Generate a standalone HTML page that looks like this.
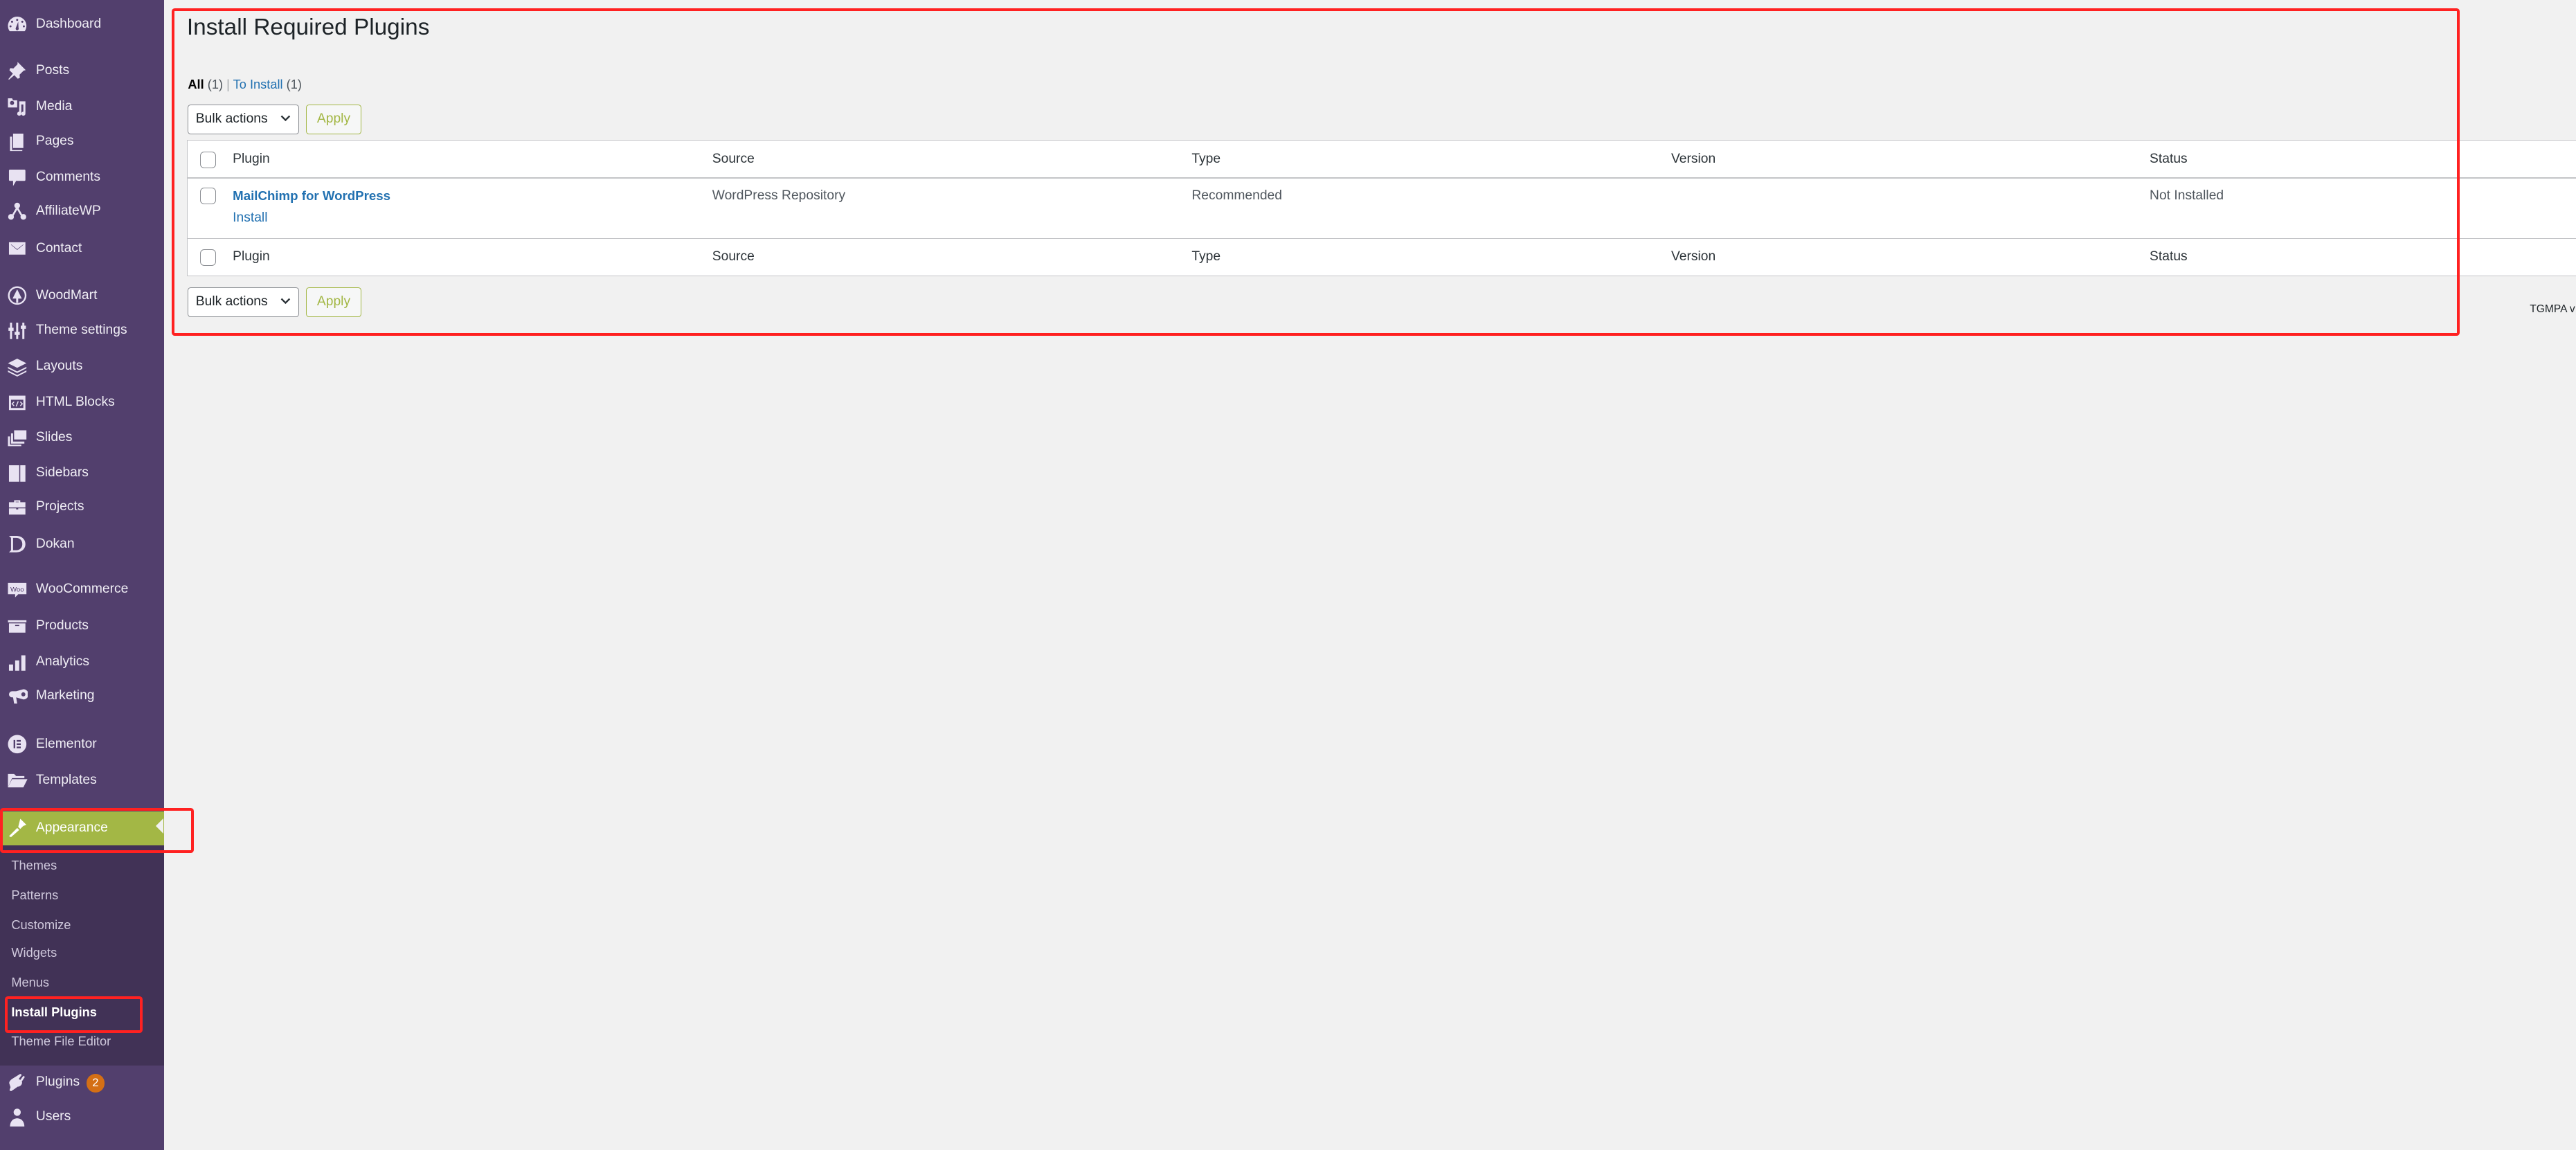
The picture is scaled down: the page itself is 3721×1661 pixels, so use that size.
<!DOCTYPE html>
<html><head><meta charset="utf-8"><style>
html,body{margin:0;padding:0}
body{width:2509px;height:1096px;zoom:1.48307;background:#f1f1f1;font-family:"Liberation Sans",sans-serif;position:relative;overflow:hidden;color:#1d2327}
#side{position:absolute;left:0;top:0;width:160px;height:1120px;background:#523f6d}
.it{position:absolute;left:0;width:160px;height:30px;line-height:30px;color:#f0eef5;font-size:13px}
.it span{position:absolute;left:35px;top:0}
.it svg{position:absolute;left:7px;top:5px;width:20px;height:20px;fill:#e8e2f2}
#sub{position:absolute;left:0;top:823px;width:160px;height:215px;background:#413256}
.si{position:absolute;left:11px;font-size:12.3px;color:#cfc8dc;height:20px;line-height:20px}
#green{position:absolute;left:0;top:790px;width:160px;height:33px;background:#a3b745}
.red{position:absolute;border:3px solid #ff2121;border-radius:3px;box-sizing:border-box}
h1{position:absolute;left:182px;top:14px;margin:0;font-weight:400;font-size:22.5px;color:#1d2327}
.subsub{position:absolute;left:183px;top:75px;font-size:12.3px;color:#50575e}
.subsub b{color:#000;font-weight:600}
.subsub a{color:#2271b1}
.sel{position:absolute;width:108px;height:29px;border:1px solid #8c8f94;border-radius:3px;background:#fff;box-sizing:border-box;font-size:13px;line-height:27px;padding-left:7px}
.sel svg{position:absolute;right:7px;top:9px}
.app{position:absolute;width:54px;height:29px;border:1px solid #a3b745;border-radius:3px;background:#f6f7f7;box-sizing:border-box;color:#a3b745;font-size:13px;line-height:27px;text-align:center}
#tbl{position:absolute;left:182px;top:136px;width:2340px;height:133px;background:#fff;border:1px solid #c3c4c7;box-sizing:border-box}
.hl{position:absolute;left:0;right:0;height:1px;background:#c3c4c7}
.t{position:absolute;font-size:13px;color:#2c3338;white-space:nowrap}
.cb{position:absolute;left:12px;width:16px;height:16px;border:1px solid #8c8f94;border-radius:4px;box-sizing:border-box;background:#fff}
</style></head><body>
<div id="side">
<div class="it" style="top:9px"><svg viewBox="0 0 20 20"><path d="M10 2a9 9 0 0 0-9 9c0 2 .6 3.8 1.7 5.3h14.6A9 9 0 0 0 19 11a9 9 0 0 0-9-9zm0 2.2a1 1 0 1 1 0 2 1 1 0 0 1 0-2zM5 6a1 1 0 1 1 0 2 1 1 0 0 1 0-2zm10 0a1 1 0 1 1 0 2 1 1 0 0 1 0-2zM3.5 10.5a1 1 0 1 1 0 2 1 1 0 0 1 0-2zm13 0a1 1 0 1 1 0 2 1 1 0 0 1 0-2zM11 7l.3 6a1.5 1.5 0 1 1-2.6 0z"/></svg><span>Dashboard</span></div>
<div class="it" style="top:54px"><svg viewBox="0 0 20 20"><path d="M10.4 1.7l7.9 7.9-2 .5-4 4 .3 3-2 .9-3.4-3.4L2 19l-.6-.6 4.4-5.3-3.4-3.4.9-2 3 .3 4-4z"/></svg><span>Posts</span></div>
<div class="it" style="top:89px"><svg viewBox="0 0 20 20"><path d="M1 2h4l1 2h4v7H1zm4 2.5a2 2 0 1 0 0 4 2 2 0 0 0 0-4zM12 5h6v12a2 2 0 1 1-2-2V8h-2v9a2 2 0 1 1-2-2z"/></svg><span>Media</span></div>
<div class="it" style="top:123px"><svg viewBox="0 0 20 20"><path d="M6 2h10v14H6zM3 5h2v13h10v1H3z"/></svg><span>Pages</span></div>
<div class="it" style="top:158px"><svg viewBox="0 0 20 20"><path d="M3 2h14a1 1 0 0 1 1 1v9a1 1 0 0 1-1 1H9l-3 5v-5H3a1 1 0 0 1-1-1V3a1 1 0 0 1 1-1z"/></svg><span>Comments</span></div>
<div class="it" style="top:191px"><svg viewBox="0 0 20 20"><circle cx="10" cy="4" r="2.8"/><circle cx="4" cy="15" r="2.8"/><circle cx="16" cy="15" r="2.8"/><path d="M9 6l-4 7 1.5.8L10 8l3.5 5.8L15 13l-4-7z"/></svg><span>AffiliateWP</span></div>
<div class="it" style="top:227px"><svg viewBox="0 0 20 20"><path d="M2 4h16v12H2zm2 2v.5l6 5 6-5V6l-6 4.8z"/></svg><span>Contact</span></div>
<div class="it" style="top:273px"><svg viewBox="0 0 20 20"><path d="M10 1a9 9 0 1 0 0 18 9 9 0 0 0 0-18zm0 1.6a7.4 7.4 0 1 1 0 14.8 7.4 7.4 0 0 1 0-14.8zM10 4l-4.5 9h3.5v4h2v-4h3.5z"/></svg><span>WoodMart</span></div>
<div class="it" style="top:307px"><svg viewBox="0 0 20 20"><path d="M3 2h2v16H3zm6 0h2v16H9zm6 0h2v16h-2zM1.5 7h5v3h-5zm6 4h5v3h-5zm6-6h5v3h-5z"/></svg><span>Theme settings</span></div>
<div class="it" style="top:342px"><svg viewBox="0 0 20 20"><path d="M10 2l9 4.5-9 4.5-9-4.5zM1 10l9 4.5 9-4.5v1.5l-9 4.5-9-4.5zm0 3.5l9 4.5 9-4.5V15l-9 4.5L1 15z"/></svg><span>Layouts</span></div>
<div class="it" style="top:377px"><svg viewBox="0 0 20 20"><path d="M2 3h16v14H2zm2 4v8h12V7z"/><path d="M7 9l-2 2 2 2M13 9l2 2-2 2M11 8.5l-2 5" stroke="#e8e2f2" fill="none"/></svg><span>HTML Blocks</span></div>
<div class="it" style="top:411px"><svg viewBox="0 0 20 20"><path d="M7 3h12v9H7zM4 6h2v8h11v2H4zM1 9h2v8h11v1.5H1z"/></svg><span>Slides</span></div>
<div class="it" style="top:446px"><svg viewBox="0 0 20 20"><path d="M2 2h10v16H2zm11 0h5v16h-5z"/></svg><span>Sidebars</span></div>
<div class="it" style="top:479px"><svg viewBox="0 0 20 20"><path d="M7 3h6v2h5v5H2V5h5zm1.5 1.5V5h3v-.5zM2 11h7v1h2v-1h7v6H2z"/></svg><span>Projects</span></div>
<div class="it" style="top:515px"><svg viewBox="0 0 20 20"><path d="M2 2h7c5 0 9 3 9 8s-4 8-9 8H2l2-2V4zm4 2v12h3c3 0 6-2 6-6s-3-6-6-6z"/></svg><span>Dokan</span></div>
<div class="it" style="top:559px"><svg viewBox="0 0 20 20"><path d="M1 4h18v11h-8l-3 3v-3H1z"/><text x="10" y="12.5" font-size="6.5" text-anchor="middle" fill="#523f6d" font-family="Liberation Sans">Woo</text></svg><span>WooCommerce</span></div>
<div class="it" style="top:595px"><svg viewBox="0 0 20 20"><path d="M1 4h18v2H1zm1 3h16v9H2zm6 1.5v1h4v-1z"/></svg><span>Products</span></div>
<div class="it" style="top:630px"><svg viewBox="0 0 20 20"><path d="M2 12h4v6H2zm6-4h4v10H8zm6-5h4v15h-4z"/></svg><span>Analytics</span></div>
<div class="it" style="top:663px"><svg viewBox="0 0 20 20"><path d="M16 3a3 3 0 0 1 0 10l-7-2H5a3 3 0 0 1 0-6h4zm0 3a2 2 0 1 0 0 4 2 2 0 0 0 0-4zM6 11h3l1 6H7z"/></svg><span>Marketing</span></div>
<div class="it" style="top:710px"><svg viewBox="0 0 20 20"><path d="M10 1a9 9 0 1 0 0 18 9 9 0 0 0 0-18zM6.5 6h1.6v8H6.5zm3 0h4v1.6h-4zm0 3.2h4v1.6h-4zm0 3.2h4V14h-4z"/></svg><span>Elementor</span></div>
<div class="it" style="top:745px"><svg viewBox="0 0 20 20"><path d="M1 4h6l2 2h8v2H5l-4 9zm4 5h15l-4 8H1z"/></svg><span>Templates</span></div>
</div>
<div id="green"></div>
<div class="it" style="top:790px;height:33px;line-height:33px;color:#fff"><svg viewBox="0 0 20 20" style="top:6px;fill:#fff"><path d="M13 1l6 6-3 1-3 3-2-2zM10 10l-8 8 2 1 8-7z"/></svg><span>Appearance</span></div>
<div style="position:absolute;left:152px;top:797px;width:0;height:0;border-top:8px solid transparent;border-bottom:8px solid transparent;border-right:8px solid #f1f1f1"></div>
<div id="sub"></div>
<div class="si" style="top:833px">Themes</div>
<div class="si" style="top:862px">Patterns</div>
<div class="si" style="top:891px">Customize</div>
<div class="si" style="top:918px">Widgets</div>
<div class="si" style="top:947px">Menus</div>
<div class="si" style="top:976px;color:#fff;font-weight:bold">Install Plugins</div>
<div class="si" style="top:1004px">Theme File Editor</div>
<div class="it" style="top:1039px"><svg viewBox="0 0 20 20"><path d="M13 2l1.5 1-3 4 1.5 1 3-4 1.5 1-3 4.5c1 2-1 5-4 5L7 17l-3 2-1.5-1 1-3-1-3c-1-2 1-4 2.5-5z"/></svg><span>Plugins</span><div style="position:absolute;left:84px;top:7px;width:18px;height:18px;border-radius:9px;background:#d46f15;color:#fff;font-size:11px;line-height:18px;text-align:center">2</div></div>
<div class="it" style="top:1073px"><svg viewBox="0 0 20 20"><circle cx="10" cy="5" r="3.5"/><path d="M3 19c0-5 3-8 7-8s7 3 7 8z"/></svg><span>Users</span></div>

<h1>Install Required Plugins</h1>
<div class="subsub"><b>All</b> (1) <span style="color:#a7aaad">|</span> <a>To Install</a> (1)</div>
<div class="sel" style="left:183px;top:102px">Bulk actions<svg width="10" height="7" viewBox="0 0 10 7"><path d="M1 1l4 4 4-4" stroke="#2c3338" stroke-width="1.6" fill="none"/></svg></div>
<div class="app" style="left:298px;top:102px">Apply</div>
<div id="tbl">
<div class="hl" style="top:36px"></div>
<div class="hl" style="top:95px"></div>
<div class="cb" style="top:11px"></div>
<div class="cb" style="top:46px"></div>
<div class="cb" style="top:106px"></div>
<div class="t" style="left:44px;top:11px">Plugin</div>
<div class="t" style="left:511px;top:11px">Source</div>
<div class="t" style="left:978px;top:11px">Type</div>
<div class="t" style="left:1445px;top:11px">Version</div>
<div class="t" style="left:1911px;top:11px">Status</div>
<div class="t" style="left:44px;top:47px;color:#2271b1;font-weight:600;font-size:12.6px">MailChimp for WordPress</div>
<div class="t" style="left:44px;top:68px;color:#2271b1">Install</div>
<div class="t" style="left:511px;top:47px;color:#50575e">WordPress Repository</div>
<div class="t" style="left:978px;top:47px;color:#50575e">Recommended</div>
<div class="t" style="left:1911px;top:47px;color:#50575e">Not Installed</div>
<div class="t" style="left:44px;top:106px">Plugin</div>
<div class="t" style="left:511px;top:106px">Source</div>
<div class="t" style="left:978px;top:106px">Type</div>
<div class="t" style="left:1445px;top:106px">Version</div>
<div class="t" style="left:1911px;top:106px">Status</div>
</div>
<div class="sel" style="left:183px;top:280px">Bulk actions<svg width="10" height="7" viewBox="0 0 10 7"><path d="M1 1l4 4 4-4" stroke="#2c3338" stroke-width="1.6" fill="none"/></svg></div>
<div class="app" style="left:298px;top:280px">Apply</div>
<div class="t" style="left:2464px;top:295px;font-size:10.5px;color:#1d2327">TGMPA v</div>

<div class="red" style="left:167px;top:8px;width:2229px;height:319px"></div>
<div class="red" style="left:0;top:787px;width:189px;height:44px"></div>
<div class="red" style="left:5px;top:970px;width:134px;height:36px"></div>
</body></html>
